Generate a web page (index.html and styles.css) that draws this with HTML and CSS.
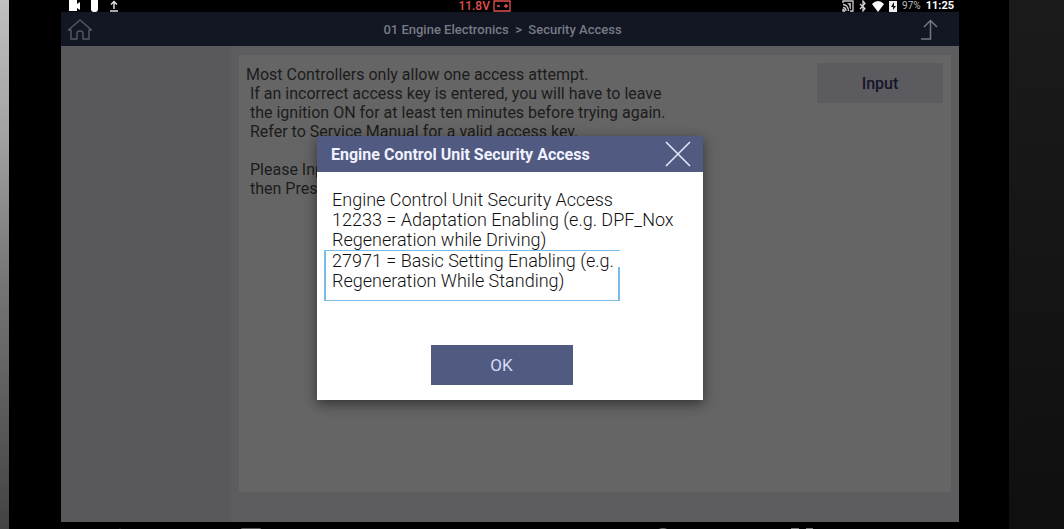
FILE: index.html
```html
<!DOCTYPE html>
<html lang="en">
<head>
    <meta charset="UTF-8">
    <meta name="viewport" content="width=device-width, initial-scale=1.0">
    <title>Security Access</title>
    <link rel="stylesheet" href="styles.css">
</head>
<body>
    <div class="tablet">
        <div class="screen">
            <!-- Android status bar -->
            <div class="status-bar">
                <div class="status-left">
                    <svg width="12" height="12" viewBox="0 0 12 12" fill="#fff"><path d="M0 0h8v4l3-2v8l-3-2v3H0z"/></svg>
                    <svg width="8" height="12" viewBox="0 0 8 12" fill="#fff"><rect x="0" y="-4" width="7" height="16" rx="3"/></svg>
                    <svg width="10" height="12" viewBox="0 0 10 12" fill="none" stroke="#ddd"><path d="M5 9V1M2 4.500l3-3 3 3M1 11h8" stroke-width="1.500"/></svg>
                </div>
                <div class="voltage">
                    <span>11.8V</span>
                    <svg width="18" height="12" viewBox="0 0 18 12" fill="none" stroke="#e0504f"><path d="M1 1h16v10H1zM4 6h3M11 6h4M13 4v4" stroke-width="1.300"/></svg>
                </div>
                <div class="status-right">
                    <svg width="12" height="12" viewBox="0 0 12 12" fill="none" stroke="#ccc" stroke-width="1.300"><path d="M1 3V1h10v10H8M1 4.500c3 0 5.500 2.500 5.500 6.500M1 7.500c2 0 3 1.500 3 3.500"/><path d="M1 9.500c1 0 1.500.5 1.500 1.500H1z" fill="#ccc"/><path d="M5 3h4v6H8C7.500 6 6.500 4 5 3z" fill="#aaa" stroke="none"/></svg>
                    <svg width="8" height="12" viewBox="0 0 8 12" fill="none" stroke="#ddd" stroke-width="1.200"><path d="M1 4l5 4.500L4 11V1l2 2.500L1 9"/></svg>
                    <svg width="12" height="12" viewBox="0 0 12 12" fill="#fff"><path d="M0 4Q6-2 12 4L6 12z"/></svg>
                    <svg width="8" height="12" viewBox="0 0 8 12"><path d="M0 1h8v11H0z" fill="#eee"/><path d="M5 2L2 7h2v3l3-4H5z" fill="#111"/></svg>
                    <span class="percent">97%</span>
                    <span class="clock">11:25</span>
                </div>
            </div>

            <header class="header">
                <button class="icon-btn" type="button" aria-label="Home">
                    <svg width="26" height="22" viewBox="0 0 26 22" fill="none" stroke="#555a69" stroke-width="1.400"><path d="M4 11v9h6v-6q0-2 3-2t3 2v6h6v-9h2.500L13 1 1.500 11z" stroke-linejoin="round"/></svg>
                </button>
                <h1 class="breadcrumb">01 Engine Electronics &nbsp;&gt;&nbsp; Security Access</h1>
                <button class="icon-btn icon-right" type="button" aria-label="Back">
                    <svg width="18" height="22" viewBox="0 0 18 22" fill="none" stroke="#747783" stroke-width="1.500"><path d="M1 20h9.500V2M4 8l6.500-6.500L17 8"/></svg>
                </button>
            </header>

            <main class="content">
                <aside class="sidebar"></aside>
                <section class="card">
                    <p class="notice">Most Controllers only allow one access attempt.
 If an incorrect access key is entered, you will have to leave
 the ignition ON for at least ten minutes before trying again.
 Refer to Service Manual for a valid access key.

 Please Inp
 then Press</p>
                    <button class="input-btn" type="button">Input</button>
                </section>
            </main>

            <div class="overlay">
                <div class="dialog" role="dialog" aria-labelledby="dialog-title">
                    <div class="dialog-header">
                        <h2 id="dialog-title">Engine Control Unit Security Access</h2>
                        <button class="icon-btn" type="button" aria-label="Close">
                            <svg width="26" height="26" viewBox="0 0 26 26" stroke="#e4e7fb" stroke-width="1.600"><path d="M1 1l24 24M25 1L1 25"/></svg>
                        </button>
                    </div>
                    <div class="dialog-body">
                        <p class="codes">Engine Control Unit Security Access<br>12233 = Adaptation Enabling (e.g. DPF_Nox<br>Regeneration while Driving)</p>
                        <p class="codes marked">27971 = Basic Setting Enabling (e.g.<br>Regeneration While Standing)</p>
                        <button class="ok-btn" type="button">OK</button>
                    </div>
                </div>
            </div>

            <!-- Android navigation keys, only their top edge is on screen -->
            <div class="nav-bar">
                <svg width="20" height="20" viewBox="0 0 20 20" fill="#555"><path d="M10 0l9 18H1z"/></svg>
                <svg width="20" height="20" viewBox="0 0 20 20" fill="#555"><rect width="20" height="20" rx="1"/></svg>
                <span></span>
                <svg width="20" height="20" viewBox="0 0 20 20" fill="#666"><circle cx="10" cy="9" r="9"/></svg>
                <svg width="22" height="20" viewBox="0 0 22 20" fill="#777"><path d="M0 0h8v8H0zM15 0h7v8h-7z"/></svg>
            </div>
        </div>
    </div>
</body>
</html>
```
FILE: styles.css
```css
* {
    box-sizing: border-box;
}
body {
    margin: 0;
    min-height: 100vh;
    display: flex;
    font-family: Roboto, 'Liberation Sans', sans-serif;
    background: linear-gradient(#1b1b1b, #0f0f0f);
}
body::before {
    content: '';
    width: 9px;
    background: linear-gradient(#c0c0c0, #a4a4a4 24%, #777 52%, #434343);
}
h1, h2, p {
    margin: 0;
}
button {
    font-family: inherit;
    border: none;
    padding: 0;
    cursor: pointer;
}
svg {
    display: block;
}
.tablet {
    flex: 1;
    display: flex;
    margin-right: 55px;
    padding: 0 50px 0 52px;
    background: #000;
}
.screen {
    position: relative;
    flex: 1;
    display: flex;
    flex-direction: column;
}

/* Status bar */
.status-bar {
    height: 12px;
    display: grid;
    grid-template-columns: 44% 1fr auto;
    align-items: end;
    padding: 0 5px 3px 8px;
    overflow: hidden;
    line-height: 12px;
}
.status-left, .voltage, .status-right {
    display: flex;
    align-items: flex-end;
}
.status-left {
    gap: 10px;
}
.voltage {
    gap: 3px;
    font-size: 12px;
    font-weight: 500;
    color: #e0504f;
}
.status-right {
    gap: 5px;
    color: #fff;
}
.percent {
    font-size: 10px;
    color: #bbb;
}
.clock {
    font-size: 11px;
    font-weight: 700;
}

/* Header */
.header {
    height: 34px;
    display: grid;
    grid-template-columns: 1fr auto 1fr;
    align-items: center;
    padding: 1px 21px 0 6px;
    background: #131623;
}
.icon-btn {
    background: none;
    justify-self: start;
}
.icon-right {
    justify-self: end;
}
.breadcrumb {
    font-size: 13px;
    font-weight: 500;
    color: #777b86;
}

/* Content */
.content {
    flex: 1;
    display: flex;
    padding: 9px 8px 30px 0;
    background: #5d5d5f;
    box-shadow: inset 170px 0 #59595b;
}
.sidebar {
    flex: 0 0 178px;
}
.card {
    flex: 1;
    display: flex;
    justify-content: space-between;
    align-items: flex-start;
    padding: 8px 8px 8px 7px;
    background: #656565;
}
.notice {
    padding-top: 2px;
    white-space: pre;
    font-size: 16px;
    line-height: 19px;
    color: #1c1c1c;
}
.input-btn {
    width: 126px;
    height: 40px;
    font-size: 16px;
    font-weight: 500;
    color: #15162a;
    background: #5c5c60;
}

/* Dialog */
.overlay {
    position: absolute;
    inset: 14px 0 7px;
    display: grid;
    place-items: center;
}
.dialog {
    width: 386px;
    background: #fff;
    box-shadow: 0 4px 12px rgba(0, 0, 0, 0.5);
}
.dialog-header {
    height: 36px;
    display: flex;
    justify-content: space-between;
    align-items: center;
    padding: 0 12px 0 14px;
    background: #515a80;
}
.dialog-header h2 {
    font-size: 16px;
    font-weight: 700;
    color: #f0f2ff;
}
.dialog-body {
    display: flex;
    flex-direction: column;
    align-items: flex-start;
    padding: 18px 8px 15px 7px;
}
.codes {
    padding-left: 8px;
    font-size: 18px;
    font-weight: 300;
    line-height: 20px;
    color: #111;
}
.marked {
    position: relative;
    width: 296px;
    padding: 0 0 9px 6px;
    border: solid #77bde8;
    border-width: 1px 0 1px 2px;
}
.marked::after {
    content: '';
    position: absolute;
    right: 0;
    top: 16px;
    bottom: 0;
    width: 2px;
    background: #77bde8;
}
.ok-btn {
    width: 142px;
    height: 40px;
    margin: 44px 16px 0 0;
    align-self: center;
    font-size: 17px;
    color: #d5dbf8;
    background: #515a80;
}

/* Navigation keys */
.nav-bar {
    height: 7px;
    display: grid;
    grid-template-columns: 118fr 144fr 271fr 140fr 138fr 88fr;
    justify-items: center;
    padding-top: 6px;
    overflow: hidden;
}
```
